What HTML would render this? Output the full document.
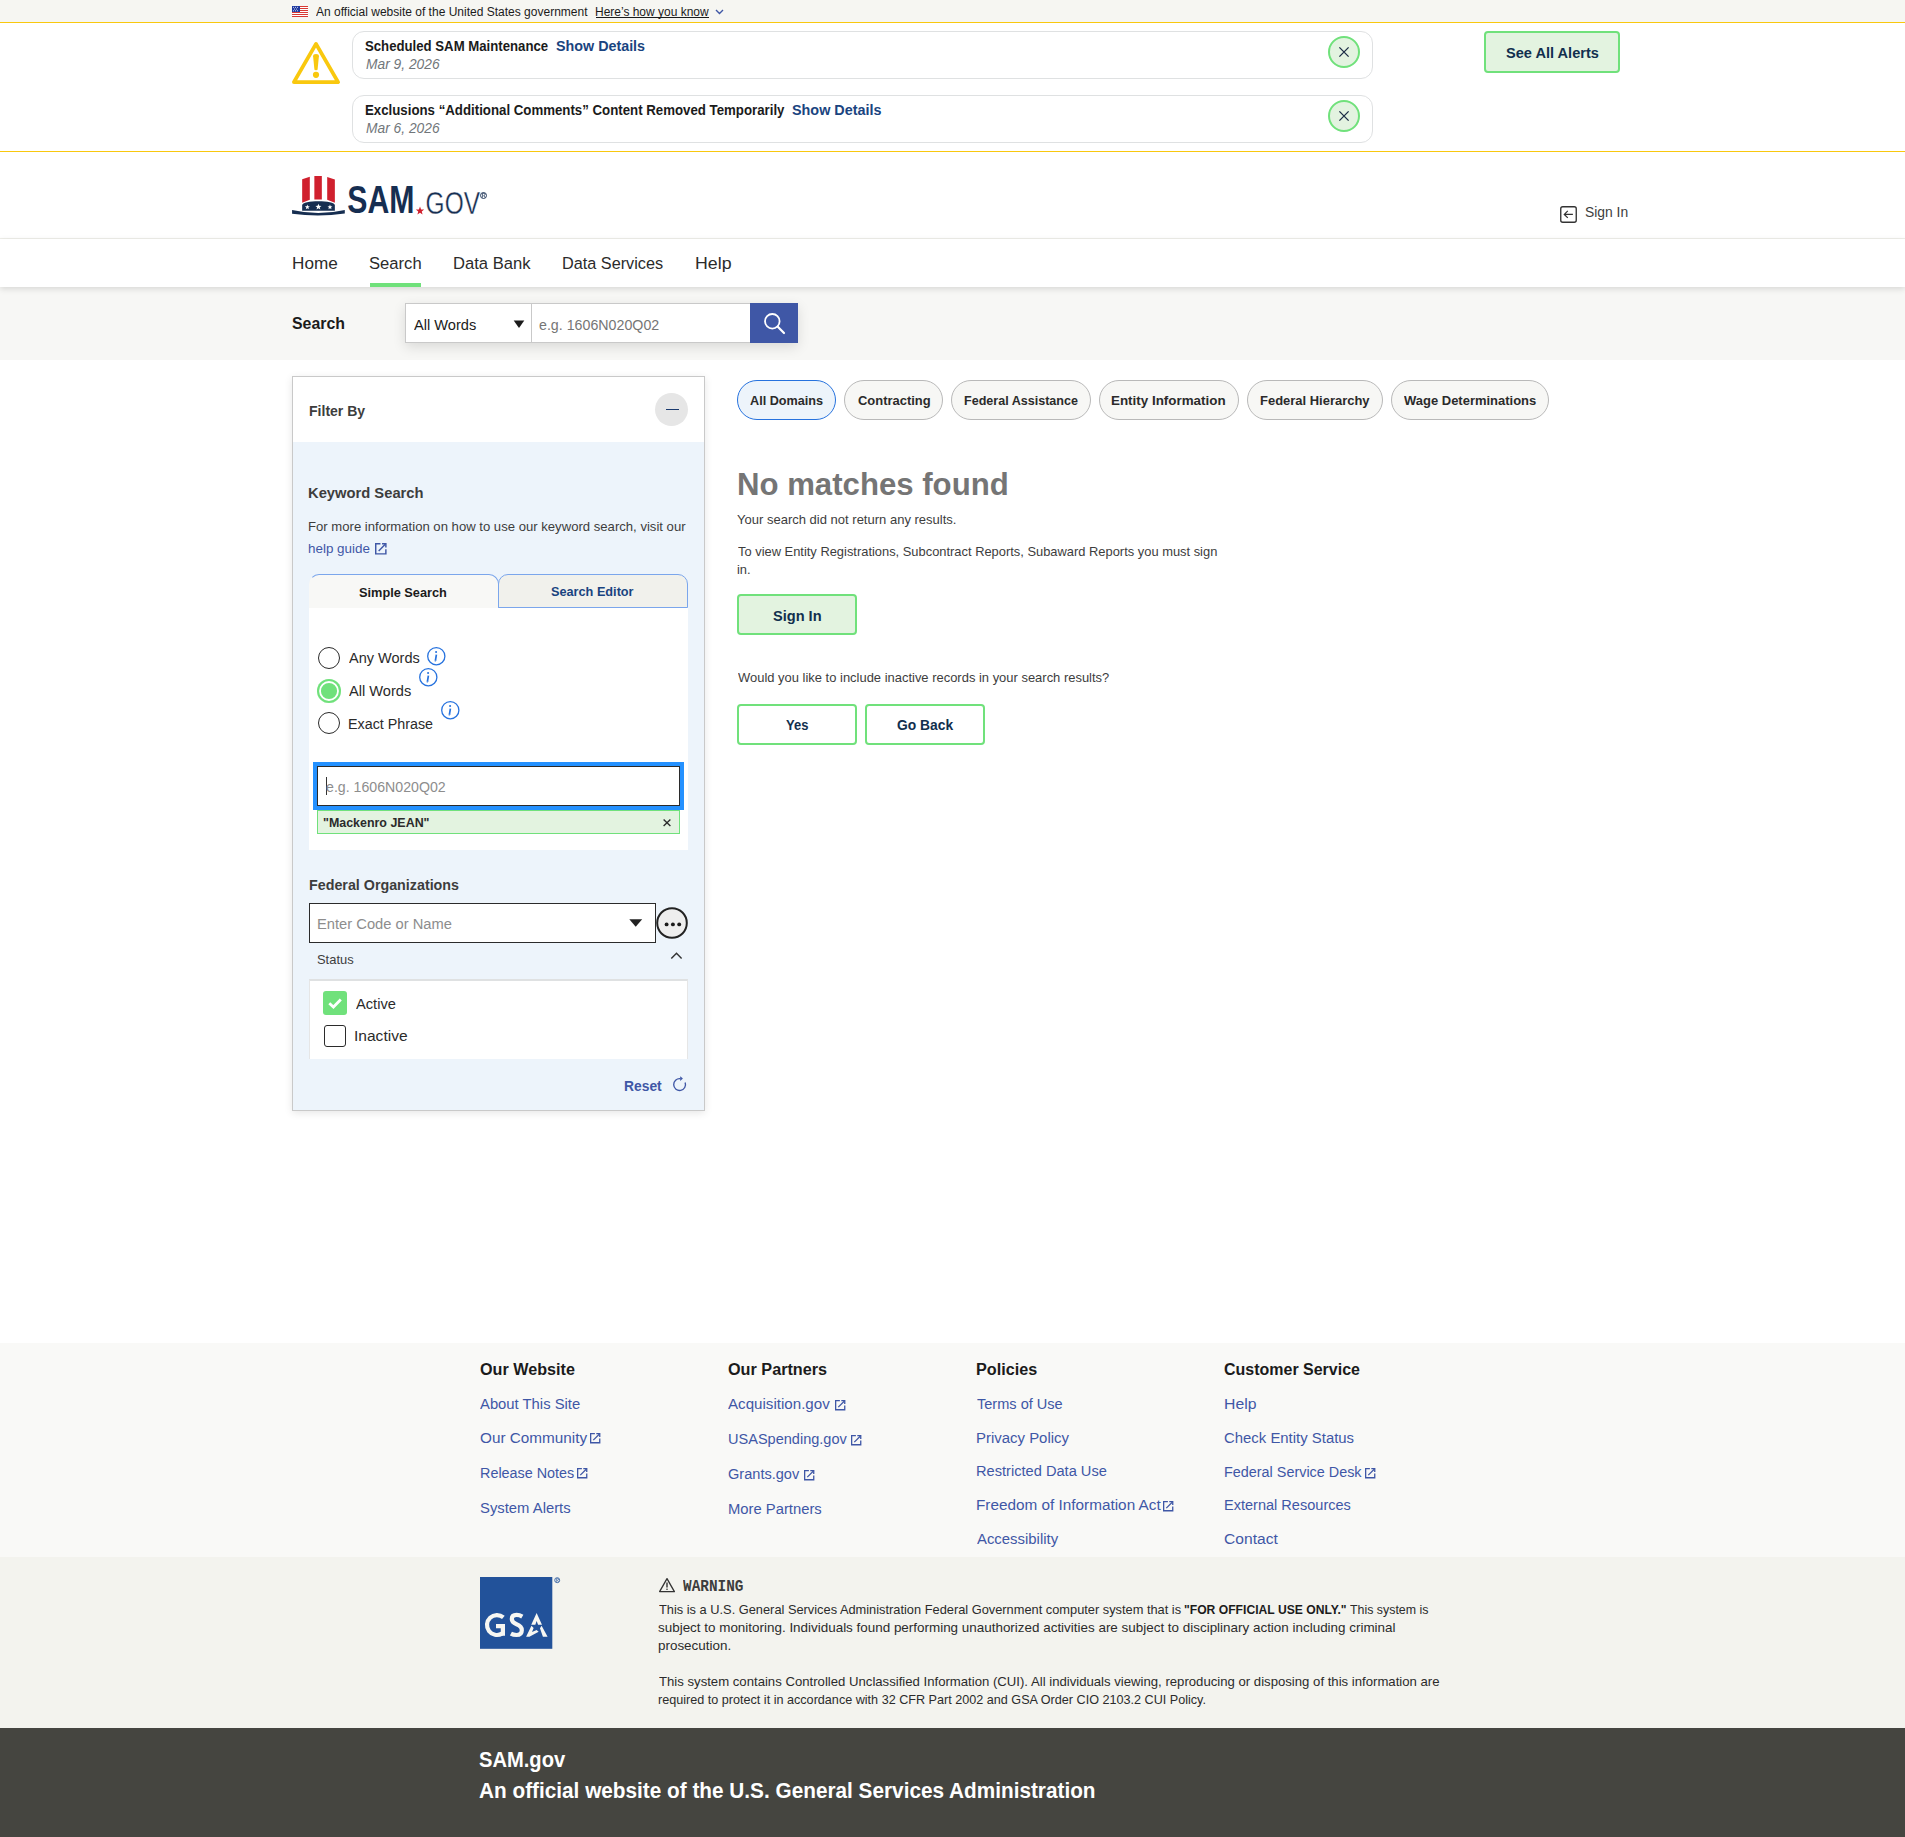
<!DOCTYPE html>
<html lang="en"><head><meta charset="utf-8"><title>SAM.gov | Search</title>
<style>
html,body{margin:0;padding:0}
body{width:1905px;height:1837px;position:relative;overflow:hidden;background:#fff;font-family:"Liberation Sans",sans-serif;color:#1b1b1b}
.a{position:absolute;box-sizing:border-box}
.t{position:absolute;white-space:nowrap;transform-origin:0 0}
svg.s{position:absolute;overflow:visible}
.pill{position:absolute;box-sizing:border-box;top:380px;height:40px;border:1px solid #b9b9b9;border-radius:20px;background:#f7f7f5}
.gbtn{position:absolute;box-sizing:border-box;border:2px solid #70e17b;border-radius:4px}
.ext{position:absolute;width:12px;height:12px}
</style></head><body>
<!-- gov banner -->
<div class="a" style="left:0;top:0;width:1905px;height:22px;background:#f6f6f2"></div>
<div class="a" style="left:0;top:22px;width:1905px;height:1px;background:#f9c80e"></div>
<svg class="s" style="left:292px;top:6px" width="16" height="11" viewBox="0 0 16 11">
 <rect width="16" height="11" fill="#fff"/>
 <g fill="#d83933"><rect y="0" width="16" height="1"/><rect y="2" width="16" height="1"/><rect y="4" width="16" height="1"/><rect y="6" width="16" height="1"/><rect y="8" width="16" height="1"/><rect y="10" width="16" height="1"/></g>
 <rect width="8" height="6" fill="#1f3aa0"/>
 <g fill="#fff"><circle cx="1.5" cy="1.2" r=".5"/><circle cx="3.5" cy="1.2" r=".5"/><circle cx="5.5" cy="1.2" r=".5"/><circle cx="2.5" cy="3" r=".5"/><circle cx="4.5" cy="3" r=".5"/><circle cx="1.5" cy="4.8" r=".5"/><circle cx="3.5" cy="4.8" r=".5"/><circle cx="5.5" cy="4.8" r=".5"/></g>
</svg>
<div class="a" style="left:596px;top:17px;width:113px;height:1px;background:#1b1b1b"></div>
<svg class="s" style="left:714px;top:8px" width="12" height="8" viewBox="0 0 12 8"><polyline points="2,2 5.5,5.5 9,2" fill="none" stroke="#3f57a6" stroke-width="1.4"/></svg>

<!-- alerts -->
<svg class="s" style="left:292px;top:42px" width="48" height="43" viewBox="0 0 48 43">
 <path d="M24 1.9 L46.1 40.1 L1.9 40.1 Z" fill="none" stroke="#f9c80e" stroke-width="3.8" stroke-linejoin="round"/>
 <path d="M21.1 14.2 Q21 12 24 12 Q27 12 26.9 14.2 L25.6 27.4 Q25.4 28.2 24 28.2 Q22.6 28.2 22.4 27.4 Z" fill="#f9c80e"/>
 <circle cx="24" cy="32.8" r="3.1" fill="#f9c80e"/>
</svg>
<div class="a" style="left:352px;top:31px;width:1021px;height:48px;border:1px solid #dfe1e2;border-radius:12px"></div>
<div class="a" style="left:352px;top:95px;width:1021px;height:48px;border:1px solid #dfe1e2;border-radius:12px"></div>
<svg class="s" style="left:1327px;top:35px" width="34" height="34" viewBox="0 0 34 34"><circle cx="17" cy="17" r="15" fill="#e3f3e0" stroke="#70e17b" stroke-width="2"/><path d="M12.4 12.4 L21.6 21.6 M21.6 12.4 L12.4 21.6" stroke="#1b2b45" stroke-width="1.3"/></svg>
<svg class="s" style="left:1327px;top:99px" width="34" height="34" viewBox="0 0 34 34"><circle cx="17" cy="17" r="15" fill="#e3f3e0" stroke="#70e17b" stroke-width="2"/><path d="M12.4 12.4 L21.6 21.6 M21.6 12.4 L12.4 21.6" stroke="#1b2b45" stroke-width="1.3"/></svg>
<div class="gbtn" style="left:1484px;top:31px;width:136px;height:42px;background:#e3f3e0"></div>
<div class="a" style="left:0;top:151px;width:1905px;height:1px;background:#f9c80e"></div>

<!-- header / logo -->
<svg class="s" style="left:290px;top:170px" width="200" height="50" viewBox="290 170 200 50">
 <path d="M302.16 179.27 L309.8 176.83 L309.8 199.78 L302.16 202.7 Z" fill="#d0202e"/>
 <path d="M314.36 176.02 H321.84 V199.6 Q318.1 199.2 314.36 199.6 Z" fill="#d0202e"/>
 <path d="M327.2 177.0 L334.86 179.44 L334.86 202.7 L327.2 199.78 Z" fill="#d0202e"/>
 <path d="M302.16 210.68 L302.16 205.4 C302.16 202.3 310 201.24 318.43 201.24 C326.9 201.24 334.86 202.3 334.86 205.4 L334.86 210.68 Z" fill="#162e51" stroke="#fff" stroke-width="0.9" paint-order="stroke"/>
 <polygon points="307.36,204.50 308.00,206.22 309.83,206.30 308.40,207.44 308.89,209.20 307.36,208.19 305.83,209.20 306.32,207.44 304.89,206.30 306.72,206.22" fill="#fff"/>
 <polygon points="318.43,203.70 319.22,205.81 321.47,205.91 319.71,207.32 320.31,209.49 318.43,208.24 316.55,209.49 317.15,207.32 315.39,205.91 317.64,205.81" fill="#fff"/>
 <polygon points="329.98,204.60 330.62,206.32 332.45,206.40 331.02,207.54 331.51,209.30 329.98,208.29 328.45,209.30 328.94,207.54 327.51,206.40 329.34,206.32" fill="#fff"/>
 <path d="M292.07 210.0 Q318.5 216.0 344.8 209.9 L344.8 213.6 Q318.5 217.4 292.07 213.77 Z" fill="#162e51"/>
 <text x="347.3" y="213" font-family="Liberation Sans" font-weight="700" font-size="39.6" fill="#162e51" textLength="67.2" lengthAdjust="spacingAndGlyphs">SAM</text>
 <polygon points="420.00,206.50 421.09,209.40 424.18,209.54 421.76,211.47 422.59,214.46 420.00,212.75 417.41,214.46 418.24,211.47 415.82,209.54 418.91,209.40" fill="#d0202e"/>
 <text x="425.6" y="213.5" font-family="Liberation Sans" font-weight="400" font-size="31.4" fill="#162e51" stroke="#fff" stroke-width="0.35" textLength="54.4" lengthAdjust="spacingAndGlyphs">GOV</text>
 <circle cx="483.5" cy="195.5" r="3.0" fill="none" stroke="#162e51" stroke-width="0.9"/>
 <path d="M482.4 197.6 V193.4 H483.9 Q485 193.4 485 194.5 Q485 195.6 483.7 195.6 L485.1 197.6" fill="none" stroke="#162e51" stroke-width="0.75"/>
</svg>
<svg class="s" style="left:1559px;top:205px" width="20" height="20" viewBox="0 0 20 20"><rect x="1.75" y="1.75" width="15.5" height="15.5" rx="2" fill="none" stroke="#333" stroke-width="1.35"/><path d="M5.3 9.4 H13.9 M8.8 5.9 L5.3 9.4 L8.8 12.9" fill="none" stroke="#333" stroke-width="1.25"/></svg>
<div class="a" style="left:0;top:238px;width:1905px;height:1px;background:#efefea"></div>

<!-- search band & nav -->
<div class="a" style="left:0;top:287px;width:1905px;height:73px;background:#f7f7f5"></div>
<div class="a" style="left:0;top:239px;width:1905px;height:48px;background:#fff;box-shadow:0 2px 6px rgba(0,0,0,.13)"></div>
<div class="a" style="left:370px;top:283px;width:51px;height:4px;background:#70e17b"></div>
<div class="a" style="left:405px;top:303px;width:393px;height:40px;box-shadow:0 4px 12px rgba(0,0,0,.12)"></div>
<div class="a" style="left:405px;top:303px;width:127px;height:40px;background:#fff;border:1px solid #c9c9c9"></div>
<svg class="s" style="left:512px;top:319px" width="14" height="10" viewBox="0 0 14 10"><path d="M1.7 1.6 H12.3 L7 9 Z" fill="#1b1b1b"/></svg>
<div class="a" style="left:531px;top:303px;width:220px;height:40px;background:#fff;border:1px solid #c9c9c9"></div>
<div class="a" style="left:750px;top:303px;width:48px;height:40px;background:#3f57a6"></div>
<svg class="s" style="left:760px;top:309px" width="30" height="30" viewBox="0 0 30 30"><circle cx="12.3" cy="12.3" r="7.3" fill="none" stroke="#fff" stroke-width="1.8"/><path d="M17.8 17.8 L24 24" stroke="#fff" stroke-width="2.2" stroke-linecap="round"/></svg>

<!-- filter panel -->
<div class="a" style="left:292px;top:376px;width:413px;height:735px;background:#edf4fb;border:1px solid #c9c9c9;box-shadow:0 2px 8px rgba(0,0,0,.10)"></div>
<div class="a" style="left:293px;top:377px;width:411px;height:65px;background:#fff"></div>
<div class="a" style="left:655px;top:393px;width:33px;height:33px;border-radius:50%;background:#e6e6e6"></div>
<div class="a" style="left:665.5px;top:408.6px;width:13.5px;height:1.7px;background:#1a3a6e"></div>
<div class="a" style="left:309px;top:574px;width:190px;height:34px;background:#f8f8f6;border:1px solid #7ba6ec;border-left-color:transparent;border-bottom:0;border-radius:10px 10px 0 0"></div>
<div class="a" style="left:498px;top:574px;width:190px;height:34px;background:#f1f1ec;border:1px solid #7ba6ec;border-radius:10px 10px 0 0"></div>
<div class="a" style="left:309px;top:608px;width:379px;height:242px;background:#fff"></div>
<div class="a" style="left:318px;top:647px;width:22px;height:22px;border-radius:50%;border:1.6px solid #2b2b2b;background:#fff"></div>
<div class="a" style="left:317px;top:679px;width:24px;height:24px;border-radius:50%;background:#70e17b;box-shadow:inset 0 0 0 2.1px #70e17b,inset 0 0 0 3.9px #fff"></div>
<div class="a" style="left:318px;top:712px;width:22px;height:22px;border-radius:50%;border:1.6px solid #2b2b2b;background:#fff"></div>
<svg class="s" style="left:426px;top:646px" width="20" height="20" viewBox="0 0 20 20"><circle cx="10.3" cy="10.2" r="8.6" fill="none" stroke="#2672de" stroke-width="1.3"/><circle cx="10.1" cy="6.0" r="1.05" fill="#2672de"/><path d="M10.4 8.6 L9.4 14.6" stroke="#2672de" stroke-width="1.7"/><path d="M8.7 15.0 Q9.6 15.2 10.2 14.6" fill="none" stroke="#2672de" stroke-width="0.9"/></svg>
<svg class="s" style="left:418px;top:667px" width="20" height="20" viewBox="0 0 20 20"><circle cx="10.3" cy="10.2" r="8.6" fill="none" stroke="#2672de" stroke-width="1.3"/><circle cx="10.1" cy="6.0" r="1.05" fill="#2672de"/><path d="M10.4 8.6 L9.4 14.6" stroke="#2672de" stroke-width="1.7"/><path d="M8.7 15.0 Q9.6 15.2 10.2 14.6" fill="none" stroke="#2672de" stroke-width="0.9"/></svg>
<svg class="s" style="left:440px;top:700px" width="20" height="20" viewBox="0 0 20 20"><circle cx="10.3" cy="10.2" r="8.6" fill="none" stroke="#2672de" stroke-width="1.3"/><circle cx="10.1" cy="6.0" r="1.05" fill="#2672de"/><path d="M10.4 8.6 L9.4 14.6" stroke="#2672de" stroke-width="1.7"/><path d="M8.7 15.0 Q9.6 15.2 10.2 14.6" fill="none" stroke="#2672de" stroke-width="0.9"/></svg>
<div class="a" style="left:313px;top:762px;width:371px;height:48px;background:#2491ff"></div>
<div class="a" style="left:317px;top:766px;width:363px;height:40px;background:#fff;border:1.6px solid #2b2b2b"></div>
<div class="a" style="left:326px;top:776.5px;width:1.2px;height:18.5px;background:#333"></div>
<div class="a" style="left:317px;top:810px;width:363px;height:24px;background:#e3f3e0;border:1px solid #70e17b"></div>
<svg class="s" style="left:662px;top:817px" width="10" height="10" viewBox="0 0 10 10"><path d="M1.6 2.5 L8.4 9.1 M8.4 2.5 L1.6 9.1" stroke="#2b2b2b" stroke-width="1.35"/></svg>
<div class="a" style="left:309px;top:903px;width:347px;height:40px;background:#fff;border:1.6px solid #2b2b2b"></div>
<svg class="s" style="left:628px;top:918px" width="16" height="10" viewBox="0 0 16 10"><path d="M1.3 1.2 H14.2 L7.7 8.7 Z" fill="#222"/></svg>
<svg class="s" style="left:655px;top:906px" width="34" height="34" viewBox="0 0 34 34"><circle cx="17" cy="17" r="14.8" fill="#eee" stroke="#222" stroke-width="2"/><circle cx="11.6" cy="18.4" r="1.95" fill="#1b1b1b"/><circle cx="17.9" cy="18.4" r="1.95" fill="#1b1b1b"/><circle cx="24.2" cy="18.4" r="1.95" fill="#1b1b1b"/></svg>
<svg class="s" style="left:669px;top:950px" width="15" height="11" viewBox="0 0 15 11"><polyline points="2.3,8.6 7.5,3.2 12.6,8.6" fill="none" stroke="#333" stroke-width="1.4"/></svg>
<div class="a" style="left:309px;top:979px;width:379px;height:80px;background:#fff;border-top:2px solid #dfe1e2;border-left:1px solid #e6e6e6;border-right:1px solid #e6e6e6"></div>
<div class="a" style="left:323px;top:991px;width:24px;height:24px;border-radius:3px;background:#70e17b"></div>
<svg class="s" style="left:323px;top:991px" width="24" height="24" viewBox="0 0 24 24"><polyline points="6.3,12.3 10.4,16 17.8,8.4" fill="none" stroke="#fff" stroke-width="2.8"/></svg>
<div class="a" style="left:324px;top:1025px;width:22px;height:22px;border-radius:3px;border:1.6px solid #2b2b2b;background:#fff"></div>
<svg class="s" style="left:668px;top:1070px" width="24" height="26" viewBox="0 0 24 26"><path d="M17.14 12.58 A5.9 5.9 0 1 1 12.3 8.74" fill="none" stroke="#3f57a6" stroke-width="1.35"/><path d="M12.2 6.3 L12.2 10.9 L14.9 8.6 Z" fill="#3f57a6"/></svg>

<!-- main -->
<div class="pill" style="left:737px;width:99px;border:1.5px solid #2672de;background:#edf4fb"></div>
<div class="pill" style="left:844px;width:99px"></div>
<div class="pill" style="left:951px;width:140px"></div>
<div class="pill" style="left:1099px;width:140px"></div>
<div class="pill" style="left:1247px;width:136px"></div>
<div class="pill" style="left:1391px;width:158px"></div>
<div class="gbtn" style="left:737px;top:594.3px;width:120px;height:41.2px;background:#e3f3e0"></div>
<div class="gbtn" style="left:737px;top:703.5px;width:120px;height:41px;background:#fff"></div>
<div class="gbtn" style="left:865px;top:703.5px;width:120px;height:41px;background:#fff"></div>

<!-- footer -->
<div class="a" style="left:0;top:1343px;width:1905px;height:214px;background:#f9f9f7"></div>
<div class="a" style="left:0;top:1557px;width:1905px;height:171px;background:#f3f3ee"></div>
<div class="a" style="left:0;top:1728px;width:1905px;height:109px;background:#454540"></div>
<svg class="s" style="left:480px;top:1577px" width="82" height="72" viewBox="0 0 82 72">
 <rect x="0" y="0" width="72.3" height="71.8" fill="#22529a"/>
 <g fill="none" stroke="#f7f7f2" stroke-width="4.2">
  <path d="M23.37 40.43 A9.95 9.95 0 1 0 21.95 56.65"/>
  <path d="M42.3 39.6 Q39.5 37.9 36.6 37.9 Q31.8 37.9 31.8 42.1 Q31.8 45.4 36.6 47.3 Q41.8 49.3 41.8 53.2 Q41.8 58 36.4 58 Q33.4 58 30.9 56.6"/>
 </g>
 <path d="M16 47.1 H25 V58.7 H20.75 V51.3 H16 Z" fill="#f7f7f2"/>
 <path d="M56.62 36.0 L61.99 47.66 L58.10 47.66 L56.62 43.96 L55.33 47.66 L51.25 47.66 Z M51.44 48.77 L53.66 51.0 L51.99 54.88 L56.62 53.02 L58.66 54.69 L49.4 59.7 L46.1 59.7 Z M61.62 48.77 L67.6 59.7 L62.91 59.7 L59.95 51.17 Z" fill="#f7f7f2"/>
 <circle cx="77.2" cy="3.2" r="2.5" fill="none" stroke="#22529a" stroke-width="0.8"/>
 <path d="M76.4 4.9 V1.7 H77.6 Q78.5 1.7 78.5 2.5 Q78.5 3.3 77.4 3.3 L78.5 4.9" fill="none" stroke="#22529a" stroke-width="0.6"/>
</svg>
<svg class="s" style="left:658px;top:1577px" width="18" height="16" viewBox="0 0 18 16"><path d="M9 1.6 L16.4 14.6 H1.6 Z" fill="none" stroke="#333" stroke-width="1.3" stroke-linejoin="round"/><path d="M9 5.6 V10.4" stroke="#333" stroke-width="1.4"/><circle cx="9" cy="12.3" r=".8" fill="#333"/></svg>
<!--EXT-->
<svg class="s" style="left:374.8px;top:543.2px" width="11.6" height="11.6" viewBox="0 0 10.4 10.4"><path d="M4.9 .65 H.65 V9.75 H9.75 V5.6" fill="none" stroke="#3f57a6" stroke-width="1.3"/><path d="M6.3 .65 H9.75 V4" fill="none" stroke="#3f57a6" stroke-width="1.3"/><path d="M3.3 7.1 L9.2 1.2" stroke="#3f57a6" stroke-width="1.3"/></svg>
<svg class="s" style="left:590px;top:1433px" width="10.4" height="10.4" viewBox="0 0 10.4 10.4"><path d="M4.9 .65 H.65 V9.75 H9.75 V5.6" fill="none" stroke="#3f57a6" stroke-width="1.3"/><path d="M6.3 .65 H9.75 V4" fill="none" stroke="#3f57a6" stroke-width="1.3"/><path d="M3.3 7.1 L9.2 1.2" stroke="#3f57a6" stroke-width="1.3"/></svg>
<svg class="s" style="left:576.9px;top:1468.2px" width="10.4" height="10.4" viewBox="0 0 10.4 10.4"><path d="M4.9 .65 H.65 V9.75 H9.75 V5.6" fill="none" stroke="#3f57a6" stroke-width="1.3"/><path d="M6.3 .65 H9.75 V4" fill="none" stroke="#3f57a6" stroke-width="1.3"/><path d="M3.3 7.1 L9.2 1.2" stroke="#3f57a6" stroke-width="1.3"/></svg>
<svg class="s" style="left:834.6px;top:1400.2px" width="10.4" height="10.4" viewBox="0 0 10.4 10.4"><path d="M4.9 .65 H.65 V9.75 H9.75 V5.6" fill="none" stroke="#3f57a6" stroke-width="1.3"/><path d="M6.3 .65 H9.75 V4" fill="none" stroke="#3f57a6" stroke-width="1.3"/><path d="M3.3 7.1 L9.2 1.2" stroke="#3f57a6" stroke-width="1.3"/></svg>
<svg class="s" style="left:851px;top:1435.3px" width="10.4" height="10.4" viewBox="0 0 10.4 10.4"><path d="M4.9 .65 H.65 V9.75 H9.75 V5.6" fill="none" stroke="#3f57a6" stroke-width="1.3"/><path d="M6.3 .65 H9.75 V4" fill="none" stroke="#3f57a6" stroke-width="1.3"/><path d="M3.3 7.1 L9.2 1.2" stroke="#3f57a6" stroke-width="1.3"/></svg>
<svg class="s" style="left:803.6px;top:1470.2px" width="10.4" height="10.4" viewBox="0 0 10.4 10.4"><path d="M4.9 .65 H.65 V9.75 H9.75 V5.6" fill="none" stroke="#3f57a6" stroke-width="1.3"/><path d="M6.3 .65 H9.75 V4" fill="none" stroke="#3f57a6" stroke-width="1.3"/><path d="M3.3 7.1 L9.2 1.2" stroke="#3f57a6" stroke-width="1.3"/></svg>
<svg class="s" style="left:1162.8px;top:1500.8px" width="10.4" height="10.4" viewBox="0 0 10.4 10.4"><path d="M4.9 .65 H.65 V9.75 H9.75 V5.6" fill="none" stroke="#3f57a6" stroke-width="1.3"/><path d="M6.3 .65 H9.75 V4" fill="none" stroke="#3f57a6" stroke-width="1.3"/><path d="M3.3 7.1 L9.2 1.2" stroke="#3f57a6" stroke-width="1.3"/></svg>
<svg class="s" style="left:1364.6px;top:1467.5px" width="10.4" height="10.4" viewBox="0 0 10.4 10.4"><path d="M4.9 .65 H.65 V9.75 H9.75 V5.6" fill="none" stroke="#3f57a6" stroke-width="1.3"/><path d="M6.3 .65 H9.75 V4" fill="none" stroke="#3f57a6" stroke-width="1.3"/><path d="M3.3 7.1 L9.2 1.2" stroke="#3f57a6" stroke-width="1.3"/></svg>
<!--/EXT-->
<div class="t" style="left:315.70px;top:6.42px;font-size:12.5px;line-height:12.5px;color:#1b1b1b;transform:scaleX(0.961);">An official website of the United States government</div>
<div class="t" style="left:595.04px;top:6.42px;font-size:12.5px;line-height:12.5px;color:#1b1b1b;transform:scaleX(0.958);">Here’s how you know</div>
<div class="t" style="left:364.55px;top:40.22px;font-size:13.92px;line-height:13.92px;color:#1b1b1b;font-weight:700;transform:scaleX(0.948);">Scheduled SAM Maintenance</div>
<div class="t" style="left:555.77px;top:40.22px;font-size:13.92px;line-height:13.92px;color:#1a4480;font-weight:700;transform:scaleX(1.029);">Show Details</div>
<div class="t" style="left:365.50px;top:58.22px;font-size:13.92px;line-height:13.92px;color:#71767a;font-style:italic;transform:scaleX(0.991);">Mar 9, 2026</div>
<div class="t" style="left:364.55px;top:104.22px;font-size:13.92px;line-height:13.92px;color:#1b1b1b;font-weight:700;transform:scaleX(0.953);">Exclusions “Additional Comments” Content Removed Temporarily</div>
<div class="t" style="left:791.87px;top:104.22px;font-size:13.92px;line-height:13.92px;color:#1a4480;font-weight:700;transform:scaleX(1.034);">Show Details</div>
<div class="t" style="left:365.50px;top:122.22px;font-size:13.92px;line-height:13.92px;color:#71767a;font-style:italic;transform:scaleX(0.991);">Mar 6, 2026</div>
<div class="t" style="left:1505.75px;top:47.02px;font-size:13.92px;line-height:13.92px;color:#112f4e;font-weight:700;transform:scaleX(1.048);">See All Alerts</div>
<div class="t" style="left:1585.10px;top:204.20px;font-size:15.48px;line-height:15.48px;color:#3d3d3d;transform:scaleX(0.896);">Sign In</div>
<div class="t" style="left:291.69px;top:254.88px;font-size:17.04px;line-height:17.04px;color:#2b2b2b;transform:scaleX(1.007);">Home</div>
<div class="t" style="left:369.02px;top:254.88px;font-size:17.04px;line-height:17.04px;color:#2b2b2b;transform:scaleX(0.975);">Search</div>
<div class="t" style="left:453.03px;top:254.88px;font-size:17.04px;line-height:17.04px;color:#2b2b2b;transform:scaleX(0.974);">Data Bank</div>
<div class="t" style="left:561.85px;top:254.88px;font-size:17.04px;line-height:17.04px;color:#2b2b2b;transform:scaleX(0.954);">Data Services</div>
<div class="t" style="left:694.56px;top:254.88px;font-size:17.04px;line-height:17.04px;color:#2b2b2b;transform:scaleX(1.042);">Help</div>
<div class="t" style="left:291.81px;top:315.41px;font-size:16.05px;line-height:16.05px;color:#1b1b1b;font-weight:700;transform:scaleX(0.990);">Search</div>
<div class="t" style="left:414.40px;top:316.51px;font-size:15.34px;line-height:15.34px;color:#1b1b1b;transform:scaleX(0.954);">All Words</div>
<div class="t" style="left:539.47px;top:316.51px;font-size:15.34px;line-height:15.34px;color:#757575;transform:scaleX(0.928);">e.g. 1606N020Q02</div>
<div class="t" style="left:309.24px;top:404.12px;font-size:14.63px;line-height:14.63px;color:#3d3d3d;font-weight:700;transform:scaleX(0.960);">Filter By</div>
<div class="t" style="left:308.34px;top:486.92px;font-size:13.92px;line-height:13.92px;color:#3d3d3d;font-weight:700;transform:scaleX(1.060);">Keyword Search</div>
<div class="t" style="left:308.40px;top:520.24px;font-size:13.07px;line-height:13.07px;color:#3d3d3d;transform:scaleX(1.004);">For more information on how to use our keyword search, visit our</div>
<div class="t" style="left:308.37px;top:541.64px;font-size:13.07px;line-height:13.07px;color:#3f57a6;transform:scaleX(1.027);">help guide</div>
<div class="t" style="left:359.36px;top:586.26px;font-size:13.63px;line-height:13.63px;color:#1b1b1b;font-weight:700;transform:scaleX(0.936);">Simple Search</div>
<div class="t" style="left:551.07px;top:584.86px;font-size:13.63px;line-height:13.63px;color:#1a4480;font-weight:700;transform:scaleX(0.932);">Search Editor</div>
<div class="t" style="left:349.10px;top:650.01px;font-size:15.34px;line-height:15.34px;color:#2b2b2b;transform:scaleX(0.947);">Any Words</div>
<div class="t" style="left:349.00px;top:682.71px;font-size:15.34px;line-height:15.34px;color:#2b2b2b;transform:scaleX(0.954);">All Words</div>
<div class="t" style="left:348.07px;top:715.61px;font-size:15.34px;line-height:15.34px;color:#2b2b2b;transform:scaleX(0.933);">Exact Phrase</div>
<div class="t" style="left:326.08px;top:779.01px;font-size:15.34px;line-height:15.34px;color:#8d8d8d;transform:scaleX(0.924);">e.g. 1606N020Q02</div>
<div class="t" style="left:322.59px;top:815.76px;font-size:13.63px;line-height:13.63px;color:#2b2b2b;font-weight:700;transform:scaleX(0.913);">"Mackenro JEAN"</div>
<div class="t" style="left:308.67px;top:878.92px;font-size:13.92px;line-height:13.92px;color:#3d3d3d;font-weight:700;transform:scaleX(1.027);">Federal Organizations</div>
<div class="t" style="left:317.34px;top:916.31px;font-size:15.34px;line-height:15.34px;color:#8d8d8d;transform:scaleX(0.960);">Enter Code or Name</div>
<div class="t" style="left:316.65px;top:952.86px;font-size:13.63px;line-height:13.63px;color:#3d3d3d;transform:scaleX(0.949);">Status</div>
<div class="t" style="left:355.50px;top:996.41px;font-size:15.34px;line-height:15.34px;color:#2b2b2b;transform:scaleX(0.956);">Active</div>
<div class="t" style="left:354.49px;top:1028.01px;font-size:15.34px;line-height:15.34px;color:#2b2b2b;transform:scaleX(1.014);">Inactive</div>
<div class="t" style="left:624.44px;top:1078.73px;font-size:14.49px;line-height:14.49px;color:#3f57a6;font-weight:700;transform:scaleX(0.956);">Reset</div>
<div class="t" style="left:750.40px;top:394.46px;font-size:13.63px;line-height:13.63px;color:#2b2b2b;font-weight:700;transform:scaleX(0.928);">All Domains</div>
<div class="t" style="left:857.80px;top:394.46px;font-size:13.63px;line-height:13.63px;color:#2b2b2b;font-weight:700;transform:scaleX(0.950);">Contracting</div>
<div class="t" style="left:963.68px;top:394.46px;font-size:13.63px;line-height:13.63px;color:#2b2b2b;font-weight:700;transform:scaleX(0.921);">Federal Assistance</div>
<div class="t" style="left:1111.02px;top:394.46px;font-size:13.63px;line-height:13.63px;color:#2b2b2b;font-weight:700;transform:scaleX(0.983);">Entity Information</div>
<div class="t" style="left:1259.75px;top:394.46px;font-size:13.63px;line-height:13.63px;color:#2b2b2b;font-weight:700;transform:scaleX(0.952);">Federal Hierarchy</div>
<div class="t" style="left:1403.80px;top:394.46px;font-size:13.63px;line-height:13.63px;color:#2b2b2b;font-weight:700;transform:scaleX(0.953);">Wage Determinations</div>
<div class="t" style="left:736.73px;top:469.39px;font-size:31.67px;line-height:31.67px;color:#757575;font-weight:700;transform:scaleX(0.984);">No matches found</div>
<div class="t" style="left:736.97px;top:514.30px;font-size:12.64px;line-height:12.64px;color:#3d3d3d;transform:scaleX(1.031);">Your search did not return any results.</div>
<div class="t" style="left:738.00px;top:546.10px;font-size:12.64px;line-height:12.64px;color:#3d3d3d;transform:scaleX(1.021);">To view Entity Registrations, Subcontract Reports, Subaward Reports you must sign</div>
<div class="t" style="left:736.98px;top:564.10px;font-size:12.64px;line-height:12.64px;color:#3d3d3d;transform:scaleX(1.021);">in.</div>
<div class="t" style="left:772.69px;top:608.83px;font-size:14.49px;line-height:14.49px;color:#112f4e;font-weight:700;transform:scaleX(1.006);">Sign In</div>
<div class="t" style="left:737.50px;top:672.30px;font-size:12.64px;line-height:12.64px;color:#3d3d3d;transform:scaleX(1.026);">Would you like to include inactive records in your search results?</div>
<div class="t" style="left:786.30px;top:717.73px;font-size:14.49px;line-height:14.49px;color:#112f4e;font-weight:700;transform:scaleX(0.896);">Yes</div>
<div class="t" style="left:896.64px;top:717.73px;font-size:14.49px;line-height:14.49px;color:#112f4e;font-weight:700;transform:scaleX(0.955);">Go Back</div>
<div class="t" style="left:480.48px;top:1362.23px;font-size:15.91px;line-height:15.91px;color:#1b1b1b;font-weight:700;transform:scaleX(1.016);">Our Website</div>
<div class="t" style="left:727.68px;top:1362.23px;font-size:15.91px;line-height:15.91px;color:#1b1b1b;font-weight:700;transform:scaleX(1.019);">Our Partners</div>
<div class="t" style="left:975.98px;top:1362.23px;font-size:15.91px;line-height:15.91px;color:#1b1b1b;font-weight:700;transform:scaleX(1.017);">Policies</div>
<div class="t" style="left:1223.99px;top:1362.23px;font-size:15.91px;line-height:15.91px;color:#1b1b1b;font-weight:700;transform:scaleX(1.005);">Customer Service</div>
<div class="t" style="left:479.50px;top:1397.32px;font-size:14.63px;line-height:14.63px;color:#3f57a6;transform:scaleX(1.013);">About This Site</div>
<div class="t" style="left:480.45px;top:1430.62px;font-size:14.63px;line-height:14.63px;color:#3f57a6;transform:scaleX(1.046);">Our Community</div>
<div class="t" style="left:479.52px;top:1465.62px;font-size:14.63px;line-height:14.63px;color:#3f57a6;transform:scaleX(0.983);">Release Notes</div>
<div class="t" style="left:480.49px;top:1501.32px;font-size:14.63px;line-height:14.63px;color:#3f57a6;transform:scaleX(1.014);">System Alerts</div>
<div class="t" style="left:727.80px;top:1397.32px;font-size:14.63px;line-height:14.63px;color:#3f57a6;transform:scaleX(1.034);">Acquisition.gov</div>
<div class="t" style="left:727.71px;top:1432.42px;font-size:14.63px;line-height:14.63px;color:#3f57a6;transform:scaleX(0.994);">USASpending.gov</div>
<div class="t" style="left:727.70px;top:1467.32px;font-size:14.63px;line-height:14.63px;color:#3f57a6;transform:scaleX(0.996);">Grants.gov</div>
<div class="t" style="left:727.69px;top:1502.32px;font-size:14.63px;line-height:14.63px;color:#3f57a6;transform:scaleX(1.012);">More Partners</div>
<div class="t" style="left:977.00px;top:1397.32px;font-size:14.63px;line-height:14.63px;color:#3f57a6;transform:scaleX(0.995);">Terms of Use</div>
<div class="t" style="left:975.98px;top:1430.62px;font-size:14.63px;line-height:14.63px;color:#3f57a6;transform:scaleX(1.022);">Privacy Policy</div>
<div class="t" style="left:976.00px;top:1463.62px;font-size:14.63px;line-height:14.63px;color:#3f57a6;">Restricted Data Use</div>
<div class="t" style="left:975.95px;top:1497.62px;font-size:14.63px;line-height:14.63px;color:#3f57a6;transform:scaleX(1.047);">Freedom of Information Act</div>
<div class="t" style="left:977.00px;top:1531.62px;font-size:14.63px;line-height:14.63px;color:#3f57a6;transform:scaleX(1.018);">Accessibility</div>
<div class="t" style="left:1223.92px;top:1397.32px;font-size:14.63px;line-height:14.63px;color:#3f57a6;transform:scaleX(1.079);">Help</div>
<div class="t" style="left:1223.98px;top:1430.62px;font-size:14.63px;line-height:14.63px;color:#3f57a6;transform:scaleX(1.019);">Check Entity Status</div>
<div class="t" style="left:1224.02px;top:1465.22px;font-size:14.63px;line-height:14.63px;color:#3f57a6;transform:scaleX(0.984);">Federal Service Desk</div>
<div class="t" style="left:1224.01px;top:1498.12px;font-size:14.63px;line-height:14.63px;color:#3f57a6;transform:scaleX(0.994);">External Resources</div>
<div class="t" style="left:1223.93px;top:1531.62px;font-size:14.63px;line-height:14.63px;color:#3f57a6;transform:scaleX(1.067);">Contact</div>
<div class="t" style="left:683.10px;top:1579.09px;font-size:16.07px;line-height:16.07px;color:#3d3d3d;font-weight:700;font-family:'Liberation Mono', monospace;transform:scaleX(0.896);">WARNING</div>
<div class="t" style="left:659.00px;top:1603.78px;font-size:12.78px;line-height:12.78px;color:#2b2b2b;transform:scaleX(1.004);">This is a U.S. General Services Administration Federal Government computer system that is</div>
<div class="t" style="left:1183.85px;top:1603.78px;font-size:12.78px;line-height:12.78px;color:#1b1b1b;font-weight:700;transform:scaleX(0.951);">"FOR OFFICIAL USE ONLY."</div>
<div class="t" style="left:1350.00px;top:1603.78px;font-size:12.78px;line-height:12.78px;color:#2b2b2b;transform:scaleX(0.970);">This system is</div>
<div class="t" style="left:657.95px;top:1622.08px;font-size:12.78px;line-height:12.78px;color:#2b2b2b;transform:scaleX(1.052);">subject to monitoring. Individuals found performing unauthorized activities are subject to disciplinary action including criminal</div>
<div class="t" style="left:657.95px;top:1639.88px;font-size:12.78px;line-height:12.78px;color:#2b2b2b;transform:scaleX(1.052);">prosecution.</div>
<div class="t" style="left:659.00px;top:1676.18px;font-size:12.78px;line-height:12.78px;color:#2b2b2b;transform:scaleX(1.030);">This system contains Controlled Unclassified Information (CUI). All individuals viewing, reproducing or disposing of this information are</div>
<div class="t" style="left:658.01px;top:1694.18px;font-size:12.78px;line-height:12.78px;color:#2b2b2b;transform:scaleX(0.988);">required to protect it in accordance with 32 CFR Part 2002 and GSA Order CIO 2103.2 CUI Policy.</div>
<div class="t" style="left:479.25px;top:1749.87px;font-size:21.3px;line-height:21.3px;color:#ffffff;font-weight:700;transform:scaleX(0.946);">SAM.gov</div>
<div class="t" style="left:479.03px;top:1781.47px;font-size:21.3px;line-height:21.3px;color:#ffffff;font-weight:700;transform:scaleX(0.975);">An official website of the U.S. General Services Administration</div>
</body></html>
